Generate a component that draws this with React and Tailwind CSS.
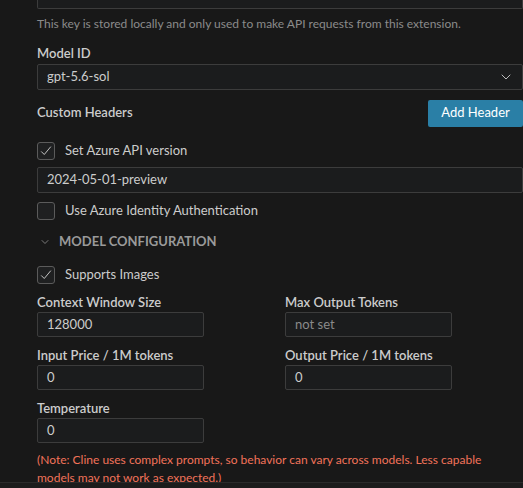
import { ChevronDown } from "lucide-react";

function Check({ checked }) {
  return (
    <span className="flex h-[18px] w-[18px] shrink-0 items-center justify-center rounded-[3px] border border-[#5b5b5b] bg-[#1f2021]">
      {checked && (
        <svg width="14" height="14" viewBox="0 0 16 16" fill="none">
          <path d="M2.5 8.5 L6 12 L13.5 3" stroke="#c8c8c8" strokeWidth="1.1" />
        </svg>
      )}
    </span>
  );
}

function CheckRow({ checked, label }) {
  return (
    <label className="flex h-[18px] items-center gap-[10px]">
      <Check checked={checked} />
      <span className="text-[13px] text-[#cccccc]">{label}</span>
    </label>
  );
}

function Field({ label, value, placeholder }) {
  return (
    <div className="flex flex-col">
      <span className="h-[20px] text-[13px] font-semibold leading-[20px] text-[#cccccc]">{label}</span>
      <div className="flex h-[25px] w-[167px] items-center rounded-[2px] border border-[#3c3c3c] bg-[#1b1c1d] px-[9px] text-[13px]">
        {value ? <span className="text-[#cccccc]">{value}</span> : <span className="text-[#8a8a8a]">{placeholder}</span>}
      </div>
    </div>
  );
}

export default function App() {
  return (
    <div
      className="flex h-[488px] w-[523px] flex-col overflow-hidden bg-[#181818]"
      style={{ fontFamily: 'Lato, "Noto Sans", sans-serif' }}
    >
      <div className="flex-1 overflow-hidden pl-[37px]">
        <div className="h-[9px] w-[486px] rounded-b-[2px] border border-t-0 border-[#3c3c3c] bg-[#1b1c1d]" />
        <p className="mt-[6px] text-[12px] leading-[18px] text-[#8b8b8b]">
          This key is stored locally and only used to make API requests from this extension.
        </p>

        <div className="mt-[10px] h-[20px] text-[13px] font-semibold leading-[20px] text-[#cccccc]">Model ID</div>
        <div className="mt-[1px] flex h-[26px] w-[486px] items-center justify-between rounded-[2px] border border-[#3c3c3c] bg-[#1b1c1d] pl-[9px] pr-[8px] text-[13px] text-[#cccccc]">
          <span>gpt-5.6-sol</span>
          <ChevronDown size={16} strokeWidth={1.5} className="text-[#bdbdbd]" />
        </div>

        <div className="mt-[9px] flex h-[28px] items-center justify-between">
          <span className="text-[13px] font-semibold text-[#cccccc]">Custom Headers</span>
          <button className="h-[27px] w-[95px] rounded-[2px] bg-[#2a7fa6] text-[13px] text-white">Add Header</button>
        </div>

        <div className="mt-[15px]">
          <CheckRow checked label="Set Azure API version" />
        </div>
        <div className="mt-[7px] flex h-[26px] w-[486px] items-center rounded-[2px] border border-[#3c3c3c] bg-[#1b1c1d] px-[9px] text-[13px] text-[#cccccc]">
          2024-05-01-preview
        </div>
        <div className="mt-[9px]">
          <CheckRow label="Use Azure Identity Authentication" />
        </div>

        <div className="mt-[12px] flex h-[20px] items-center gap-[8px]">
          <ChevronDown size={12} strokeWidth={1.5} className="ml-[2px] text-[#9a9a9a]" />
          <span className="text-[13px] font-bold uppercase text-[#9a9a9a]">Model Configuration</span>
        </div>

        <div className="mt-[14px]">
          <CheckRow checked label="Supports Images" />
        </div>

        <div className="mt-[8px] grid grid-cols-[248px_1fr] gap-y-[8px]">
          <Field label="Context Window Size" value="128000" />
          <Field label="Max Output Tokens" placeholder="not set" />
          <Field label="Input Price / 1M tokens" value="0" />
          <Field label="Output Price / 1M tokens" value="0" />
          <Field label="Temperature" value="0" />
        </div>

        <p className="mt-[8px] w-[470px] text-[12px] leading-[18px] text-[#f2735a]">
          (Note: Cline uses complex prompts, so behavior can vary across models. Less capable models may not work as expected.)
        </p>
      </div>
      <div className="h-[6px] shrink-0 border-t border-[#2b2b2b] bg-[#1c1c1c]" />
    </div>
  );
}
